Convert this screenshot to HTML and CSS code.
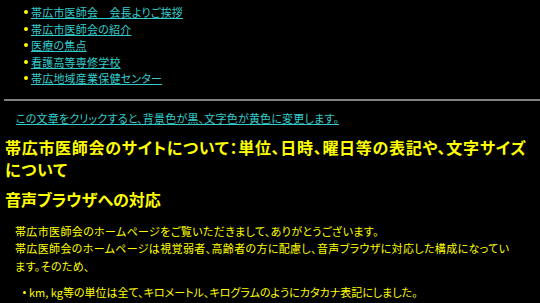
FILE: index.html
```html
<!DOCTYPE html>
<html lang="ja">
<head>
<meta charset="utf-8">
<title>帯広市医師会</title>
<link rel="stylesheet" href="styles.css">
</head>
<body>
<ul class="menu">
  <li><a href="#">帯広市医師会　会長よりご挨拶</a></li>
  <li><a href="#">帯広市医師会の紹介</a></li>
  <li><a href="#">医療の焦点</a></li>
  <li><a href="#">看護高等専修学校</a></li>
  <li><a href="#">帯広地域産業保健センター</a></li>
</ul>
<hr class="rule">
<p class="switch"><a href="#">この文章をクリックすると、背景色が黒、文字色が黄色に変更します。</a></p>
<h2 class="title">帯広市医師会のサイトについて：単位、日時、曜日等の表記や、文字サイズについて</h2>
<h3 class="section">音声ブラウザへの対応</h3>
<p class="body">帯広市医師会のホームページをご覧いただきまして、ありがとうございます。<br>帯広医師会のホームページは視覚弱者、高齢者の方に配慮し、音声ブラウザに対応した構成になっています。そのため、</p>
<ul class="notes">
  <li>km, kg等の単位は全て、キロメートル、キログラムのようにカタカナ表記にしました。</li>
</ul>
</body>
</html>
```

FILE: styles.css
```css
html, body {
  background: #000;
}
body {
  margin: 0;
  padding: 0 6px 0 5px;
  color: #ffff00;
  font-family: "Noto Sans CJK JP", "Noto Sans", sans-serif;
  font-feature-settings: "palt";
}
a {
  color: #33cccc;
}
.menu {
  margin: 0;
  padding: 4px 0 0 26px;
  font-size: 11px;
  line-height: 16.5px;
  letter-spacing: 0.2px;
  list-style: none;
}
.menu li {
  position: relative;
}
.menu li::before {
  content: "";
  position: absolute;
  left: -7px;
  top: 6px;
  width: 4px;
  height: 4px;
  border-radius: 50%;
  background: #ffff00;
}
.rule {
  margin: 12px -6px 0 -1px;
  border: 0;
  height: 2px;
  background: #808080;
}
.switch {
  margin: 9px 0 0 11px;
  font-size: 11px;
  line-height: 16px;
  letter-spacing: 0.2px;
}
.title {
  margin: 10px 0 0 0;
  font-size: 16px;
  line-height: 22px;
  font-weight: bold;
  letter-spacing: 0.7px;
}
.section {
  margin: 8px 0 0 0;
  font-size: 16px;
  line-height: 22px;
  font-weight: bold;
}
.body {
  margin: 13px 16px 0 10px;
  font-size: 11px;
  line-height: 17.5px;
  letter-spacing: 0.35px;
}
.notes {
  margin: 9px 0 0 0;
  padding: 0 0 0 24px;
  font-size: 11px;
  line-height: 17px;
  list-style: none;
}
.notes li {
  position: relative;
}
.notes li::before {
  content: "";
  position: absolute;
  left: -6px;
  top: 7px;
  width: 3px;
  height: 3px;
  border-radius: 50%;
  background: #ffff00;
}
```
